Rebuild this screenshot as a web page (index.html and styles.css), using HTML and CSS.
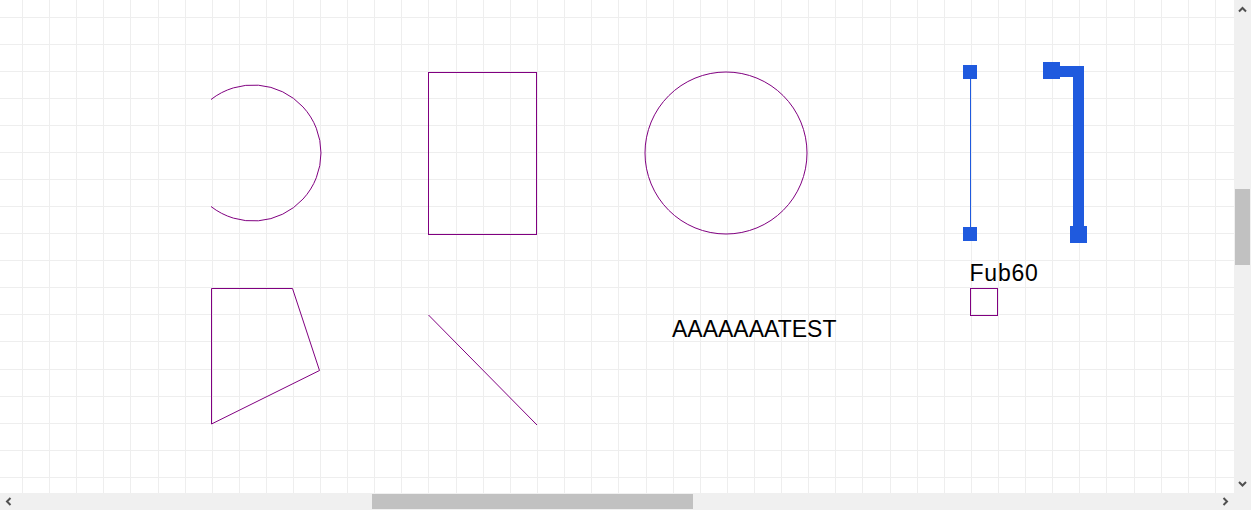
FILE: index.html
```html
<!DOCTYPE html>
<html>
<head>
<meta charset="utf-8">
<title>Canvas</title>
<link rel="stylesheet" href="styles.css">
</head>
<body>
<div class="frame">
  <div class="main-row">
    <div class="canvas">
      <svg class="board" width="1234" height="493" viewBox="0 0 1234 493" xmlns="http://www.w3.org/2000/svg">
        <g class="grid" fill="#eeeeee" shape-rendering="crispEdges">
          <rect x="22" y="0" width="1" height="493"/><rect x="49" y="0" width="1" height="493"/><rect x="76" y="0" width="1" height="493"/><rect x="103" y="0" width="1" height="493"/><rect x="130" y="0" width="1" height="493"/><rect x="158" y="0" width="1" height="493"/><rect x="185" y="0" width="1" height="493"/><rect x="212" y="0" width="1" height="493"/><rect x="239" y="0" width="1" height="493"/><rect x="266" y="0" width="1" height="493"/><rect x="293" y="0" width="1" height="493"/><rect x="320" y="0" width="1" height="493"/><rect x="347" y="0" width="1" height="493"/><rect x="374" y="0" width="1" height="493"/><rect x="401" y="0" width="1" height="493"/><rect x="428" y="0" width="1" height="493"/><rect x="456" y="0" width="1" height="493"/><rect x="483" y="0" width="1" height="493"/><rect x="510" y="0" width="1" height="493"/><rect x="537" y="0" width="1" height="493"/><rect x="564" y="0" width="1" height="493"/><rect x="591" y="0" width="1" height="493"/><rect x="618" y="0" width="1" height="493"/><rect x="646" y="0" width="1" height="493"/><rect x="673" y="0" width="1" height="493"/><rect x="700" y="0" width="1" height="493"/><rect x="727" y="0" width="1" height="493"/><rect x="754" y="0" width="1" height="493"/><rect x="781" y="0" width="1" height="493"/><rect x="808" y="0" width="1" height="493"/><rect x="835" y="0" width="1" height="493"/><rect x="862" y="0" width="1" height="493"/><rect x="890" y="0" width="1" height="493"/><rect x="917" y="0" width="1" height="493"/><rect x="944" y="0" width="1" height="493"/><rect x="971" y="0" width="1" height="493"/><rect x="998" y="0" width="1" height="493"/><rect x="1025" y="0" width="1" height="493"/><rect x="1052" y="0" width="1" height="493"/><rect x="1079" y="0" width="1" height="493"/><rect x="1106" y="0" width="1" height="493"/><rect x="1134" y="0" width="1" height="493"/><rect x="1161" y="0" width="1" height="493"/><rect x="1188" y="0" width="1" height="493"/><rect x="1215" y="0" width="1" height="493"/>
          <rect x="0" y="17" width="1234" height="1"/><rect x="0" y="44" width="1234" height="1"/><rect x="0" y="71" width="1234" height="1"/><rect x="0" y="98" width="1234" height="1"/><rect x="0" y="125" width="1234" height="1"/><rect x="0" y="152" width="1234" height="1"/><rect x="0" y="179" width="1234" height="1"/><rect x="0" y="206" width="1234" height="1"/><rect x="0" y="233" width="1234" height="1"/><rect x="0" y="260" width="1234" height="1"/><rect x="0" y="287" width="1234" height="1"/><rect x="0" y="314" width="1234" height="1"/><rect x="0" y="341" width="1234" height="1"/><rect x="0" y="369" width="1234" height="1"/><rect x="0" y="396" width="1234" height="1"/><rect x="0" y="423" width="1234" height="1"/><rect x="0" y="450" width="1234" height="1"/><rect x="0" y="477" width="1234" height="1"/>
        </g>
        <g class="shapes" fill="none" stroke="#800080" stroke-width="1">
          <path d="M211,99.5 A68,68 0 1 1 211,206.5"/>
          <rect x="428.5" y="72.5" width="108" height="162"/>
          <circle cx="726" cy="153" r="81"/>
          <polygon points="211.5,288.5 292.5,288.5 319.5,370.5 211.5,424"/>
          <line x1="428.5" y1="315" x2="537" y2="425"/>
          <rect x="970.5" y="288.5" width="27" height="27"/>
        </g>
        <g class="labels" fill="#000000">
          <text x="672" y="337" class="lbl">AAAAAAATEST</text>
          <text x="969.5" y="281" class="lbl lbl-wide">Fub60</text>
        </g>
        <g class="wires">
          <line x1="970.5" y1="71" x2="970.5" y2="234" stroke="#1f5ade" stroke-width="1"/>
          <rect x="963" y="65" width="14" height="14" fill="#1f5ade"/>
          <rect x="963" y="227" width="14" height="14" fill="#1f5ade"/>
          <polyline points="1052,71.5 1078.5,71.5 1078.5,230" fill="none" stroke="#1f5ade" stroke-width="11"/>
          <rect x="1043" y="62" width="17" height="17" fill="#1f5ade"/>
          <rect x="1070" y="226" width="17" height="17" fill="#1f5ade"/>
        </g>
      </svg>
    </div>
    <div class="vbar">
      <svg class="arrow" width="17" height="17" viewBox="0 0 17 17"><polyline points="5,11.5 8.5,8 12,11.5" fill="none" stroke="#505050" stroke-width="2"/></svg>
      <div class="vtrack">
        <div class="vthumb" style="margin-top:172px"></div>
      </div>
      <svg class="arrow" width="17" height="17" viewBox="0 0 17 17"><polyline points="5,6 8.5,9.5 12,6" fill="none" stroke="#505050" stroke-width="2"/></svg>
    </div>
  </div>
  <div class="bottom-row">
    <div class="hbar">
      <svg class="arrow" width="17" height="17" viewBox="0 0 17 17"><polyline points="10.5,5 7,8.5 10.5,12" fill="none" stroke="#505050" stroke-width="2"/></svg>
      <div class="htrack">
        <div class="hthumb" style="margin-left:355px"></div>
      </div>
      <svg class="arrow" width="17" height="17" viewBox="0 0 17 17"><polyline points="6.5,5 10,8.5 6.5,12" fill="none" stroke="#505050" stroke-width="2"/></svg>
    </div>
    <div class="corner"></div>
  </div>
</div>
</body>
</html>
```
FILE: styles.css
```css
html, body {
  margin: 0;
  padding: 0;
  background: #ffffff;
  font-family: "Liberation Sans", Arial, sans-serif;
}

.frame {
  width: 1251px;
  height: 510px;
  display: flex;
  flex-direction: column;
  overflow: hidden;
}

.main-row {
  display: flex;
  height: 493px;
}

.canvas {
  width: 1234px;
  height: 493px;
  overflow: hidden;
  background: #ffffff;
}

.board {
  display: block;
}

.lbl {
  font-family: "Liberation Sans", Arial, sans-serif;
  font-size: 23px;
}

.lbl-wide {
  font-size: 23px;
  letter-spacing: 0.8px;
}

.vbar {
  width: 17px;
  height: 493px;
  background: #f0f0f0;
  display: flex;
  flex-direction: column;
}

.arrow {
  display: block;
  flex: none;
}

.vtrack {
  flex: 1;
  display: flex;
  flex-direction: column;
  align-items: center;
}

.vthumb {
  width: 15px;
  height: 76px;
  background: #c1c1c1;
}

.bottom-row {
  display: flex;
  height: 17px;
}

.hbar {
  width: 1234px;
  height: 17px;
  background: #f0f0f0;
  display: flex;
}

.htrack {
  flex: 1;
  display: flex;
  align-items: center;
}

.hthumb {
  width: 321px;
  height: 15px;
  background: #c1c1c1;
}

.corner {
  width: 17px;
  height: 17px;
  background: #f0f0f0;
}
```
